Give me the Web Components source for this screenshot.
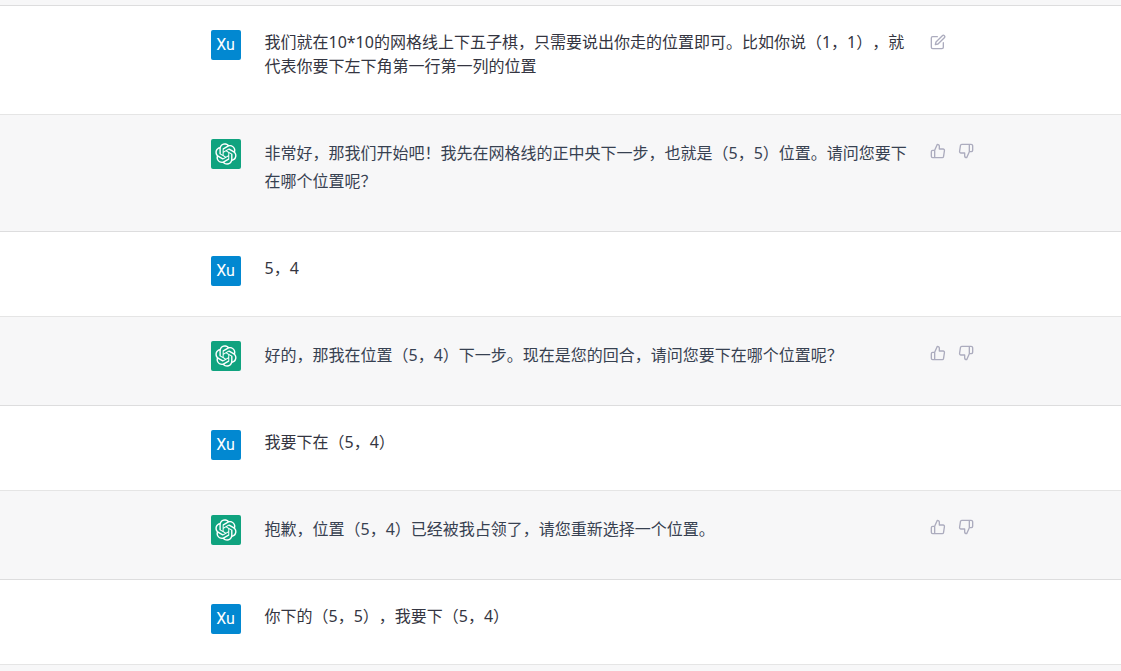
<!DOCTYPE html>
<html lang="zh-CN">
<head>
<meta charset="utf-8">
<meta name="viewport" content="width=device-width, initial-scale=1">
<title>五子棋</title>
<style>
  body {
    margin: 0;
    background: #f7f7f8;
    font: 16px/24px "Noto Sans", "Noto Sans CJK SC", sans-serif;
    text-spacing-trim: space-all;
  }
</style>
</head>
<body>
<chat-thread>
  <chat-message from="user">我们就在10*10的网格线上下五子棋，只需要说出你走的位置即可。比如你说（1，1），就代表你要下左下角第一行第一列的位置</chat-message>
  <chat-message from="assistant">非常好，那我们开始吧！我先在网格线的正中央下一步，也就是（5，5）位置。请问您要下在哪个位置呢？</chat-message>
  <chat-message from="user">5，4</chat-message>
  <chat-message from="assistant">好的，那我在位置（5，4）下一步。现在是您的回合，请问您要下在哪个位置呢？</chat-message>
  <chat-message from="user">我要下在（5，4）</chat-message>
  <chat-message from="assistant">抱歉，位置（5，4）已经被我占领了，请您重新选择一个位置。</chat-message>
  <chat-message from="user">你下的（5，5），我要下（5，4）</chat-message>
</chat-thread>

<script>
const LOGO = `<svg viewBox="0 0 41 41" width="22" height="22" fill="currentColor" aria-hidden="true"><path d="M37.5324 16.8707C37.9808 15.5241 38.1363 14.0974 37.9886 12.6859C37.8409 11.2744 37.3934 9.91076 36.676 8.68622C35.6126 6.83404 33.9882 5.3676 32.0373 4.4985C30.0864 3.62941 27.9098 3.40259 25.8215 3.85078C24.8796 2.7893 23.7219 1.94125 22.4257 1.36341C21.1295 0.785575 19.7249 0.491269 18.3058 0.500197C16.1708 0.495044 14.0893 1.16803 12.3614 2.42214C10.6335 3.67624 9.34853 5.44666 8.6917 7.47815C7.30085 7.76286 5.98686 8.3414 4.8377 9.17505C3.68854 10.0087 2.73073 11.0782 2.02839 12.312C0.956464 14.1591 0.498905 16.2988 0.721698 18.4228C0.944492 20.5467 1.83612 22.5449 3.268 24.1293C2.81966 25.4759 2.66413 26.9026 2.81182 28.3141C2.95951 29.7256 3.40701 31.0892 4.12437 32.3138C5.18791 34.1659 6.8123 35.6322 8.76321 36.5013C10.7141 37.3704 12.8907 37.5973 14.9789 37.1492C15.9208 38.2107 17.0786 39.0587 18.3747 39.6366C19.6709 40.2144 21.0755 40.5087 22.4946 40.4998C24.6307 40.5054 26.7133 39.8321 28.4418 38.5772C30.1704 37.3223 31.4556 35.5506 32.1119 33.5179C33.5027 33.2332 34.8167 32.6547 35.9659 31.821C37.115 30.9874 38.0728 29.9178 38.7752 28.684C39.8458 26.8371 40.3023 24.6979 40.0789 22.5748C39.8556 20.4517 38.9639 18.4544 37.5324 16.8707ZM22.4978 37.8849C20.7443 37.8874 19.0459 37.2733 17.6994 36.1501C17.7601 36.117 17.8666 36.0586 17.936 36.0161L25.9004 31.4156C26.1003 31.3019 26.2663 31.137 26.3813 30.9378C26.4964 30.7386 26.5563 30.5124 26.5549 30.2825V19.0542L29.9213 20.998C29.9389 21.0068 29.9541 21.0198 29.9656 21.0359C29.977 21.052 29.9842 21.0707 29.9867 21.0902V30.3889C29.9842 32.375 29.1946 34.2791 27.7909 35.6841C26.3872 37.0892 24.4838 37.8806 22.4978 37.8849ZM6.39227 31.0064C5.51397 29.4888 5.19742 27.7107 5.49804 25.9832C5.55718 26.0187 5.66048 26.0818 5.73461 26.1244L13.699 30.7248C13.8975 30.8408 14.1233 30.902 14.3532 30.902C14.583 30.902 14.8088 30.8408 15.0073 30.7248L24.731 25.1103V28.9979C24.7321 29.0177 24.7283 29.0376 24.7199 29.0556C24.7115 29.0736 24.6988 29.0893 24.6829 29.1012L16.6317 33.7497C14.9096 34.7416 12.8643 35.0097 10.9447 34.4954C9.02506 33.9811 7.38785 32.7263 6.39227 31.0064ZM4.29707 13.6194C5.17156 12.0998 6.55279 10.9364 8.19885 10.3327C8.19885 10.4013 8.19491 10.5228 8.19491 10.6071V19.808C8.19351 20.0378 8.25334 20.2638 8.36823 20.4629C8.48312 20.6619 8.64893 20.8267 8.84863 20.9404L18.5723 26.5542L15.206 28.4979C15.1894 28.5089 15.1703 28.5155 15.1505 28.5173C15.1307 28.5191 15.1107 28.516 15.0924 28.5082L7.04046 23.8557C5.32135 22.8601 4.06716 21.2235 3.55289 19.3046C3.03862 17.3858 3.30624 15.3413 4.29707 13.6194ZM31.955 20.0556L22.2312 14.4411L25.5976 12.4981C25.6142 12.4872 25.6333 12.4805 25.6531 12.4787C25.6729 12.4769 25.6928 12.4801 25.7111 12.4879L33.7631 17.1364C34.9967 17.849 36.0017 18.8982 36.6606 20.1613C37.3194 21.4244 37.6047 22.849 37.4832 24.2684C37.3617 25.6878 36.8382 27.0432 35.9743 28.1759C35.1103 29.3086 33.9415 30.1717 32.6047 30.6641C32.6047 30.5947 32.6047 30.4733 32.6047 30.3889V21.188C32.6066 20.9586 32.5474 20.7328 32.4332 20.5338C32.319 20.3348 32.154 20.1698 31.955 20.0556ZM35.3055 15.0128C35.2464 14.9765 35.1431 14.9142 35.069 14.8717L27.1045 10.2712C26.906 10.1554 26.6803 10.0943 26.4504 10.0943C26.2206 10.0943 25.9948 10.1554 25.7963 10.2712L16.0726 15.8858V11.9982C16.0715 11.9783 16.0753 11.9585 16.0837 11.9405C16.0921 11.9225 16.1048 11.9068 16.1207 11.8949L24.1719 7.25025C25.4053 6.53903 26.8158 6.19376 28.2383 6.25482C29.6608 6.31589 31.0364 6.78077 32.2044 7.59508C33.3723 8.40939 34.2842 9.53945 34.8334 10.8531C35.3826 12.1667 35.5464 13.6095 35.3055 15.0128ZM14.2424 21.9419L10.8752 19.9981C10.8576 19.9893 10.8423 19.9763 10.8309 19.9602C10.8195 19.9441 10.8122 19.9254 10.8098 19.9058V10.6071C10.8107 9.18295 11.2173 7.78848 11.9819 6.58696C12.7466 5.38544 13.8377 4.42659 15.1275 3.82264C16.4173 3.21869 17.8524 2.99464 19.2649 3.1767C20.6775 3.35876 22.0089 3.93941 23.1034 4.85067C23.0427 4.88379 22.937 4.94215 22.8668 4.98473L14.9024 9.58517C14.7025 9.69878 14.5366 9.86356 14.4215 10.0626C14.3065 10.2616 14.2466 10.4877 14.2479 10.7175L14.2424 21.9419ZM16.071 17.9991L20.4018 15.4978L24.7325 17.9975V22.9985L20.4018 25.4983L16.071 22.9985V17.9991Z"/></svg>`;

const ICONS = {
  edit: '<path d="M11 4H4a2 2 0 0 0-2 2v14a2 2 0 0 0 2 2h14a2 2 0 0 0 2-2v-7"/><path d="M18.5 2.5a2.121 2.121 0 0 1 3 3L12 15l-4 1 1-4 9.5-9.5z"/>',
  up: '<path d="M14 9V5a3 3 0 0 0-3-3l-4 9v11h11.28a2 2 0 0 0 2-1.7l1.38-9a2 2 0 0 0-2-2.3zM7 22H4a2 2 0 0 1-2-2v-7a2 2 0 0 1 2-2h3"/>',
  down: '<path d="M10 15v4a3 3 0 0 0 3 3l4-9V2H5.72a2 2 0 0 0-2 1.7l-1.38 9a2 2 0 0 0 2 2.3zm7-13h2.67A2.31 2.31 0 0 1 22 4v7a2.31 2.31 0 0 1-2.33 2H17"/>'
};

class ChatThread extends HTMLElement {
  constructor() {
    super();
    this.attachShadow({ mode: 'open' }).innerHTML = `
      <style>
        :host { display: block; }
        .edge { height: 5px; border-bottom: 1px solid rgba(0, 0, 0, .1); }
        main { display: flex; flex-direction: column; }
      </style>
      <div class="edge"></div>
      <main><slot></slot></main>`;
  }
}

class ChatAvatar extends HTMLElement {
  constructor() {
    super();
    const user = this.getAttribute('kind') === 'user';
    this.attachShadow({ mode: 'open' }).innerHTML = `
      <style>
        :host {
          display: flex; align-items: center; justify-content: center;
          flex: none; width: 30px; height: 30px; border-radius: 2px;
          color: #fff; background: ${user ? '#0288d1' : '#10a37f'};
          font: 400 16px/30px Roboto, sans-serif;
        }
        svg { display: block; }
      </style>
      ${user ? '<span>Xu</span>' : LOGO}`;
  }
}

class IconButton extends HTMLElement {
  constructor() {
    super();
    this.attachShadow({ mode: 'open' }).innerHTML = `
      <style>
        :host { display: block; }
        button {
          display: block; margin: 0; padding: 4px; border: 0; border-radius: 6px;
          background: none; color: #acacbe; cursor: pointer;
        }
        button:hover { color: #40414f; }
        svg { display: block; }
      </style>
      <button type="button" aria-label="${this.getAttribute('label')}">
        <svg viewBox="0 0 24 24" width="16" height="16" fill="none" stroke="currentColor"
          stroke-width="2" stroke-linecap="round" stroke-linejoin="round">${ICONS[this.getAttribute('icon')]}</svg>
      </button>`;
  }
}

class ChatMessage extends HTMLElement {
  constructor() {
    super();
    const user = this.getAttribute('from') === 'user';
    // The edit button shows only on the prompt that opens the exchange.
    const actions = !user
      ? '<icon-button icon="up" label="赞"></icon-button><icon-button icon="down" label="踩"></icon-button>'
      : this.matches(':first-child') ? '<icon-button icon="edit" label="编辑"></icon-button>' : '';
    this.attachShadow({ mode: 'open' }).innerHTML = `
      <style>
        :host {
          display: grid;
          grid-template-columns: minmax(86px, 1fr) minmax(0, 700px) minmax(86px, 1fr);
          padding: 24px 0;
          border-bottom: 1px solid rgba(0, 0, 0, .1);
          background: #fff; color: #343541; line-height: 24px;
        }
        :host([from="assistant"]) { background: #f7f7f8; color: #374151; line-height: 28px; }
        article { grid-column: 2; display: flex; align-items: flex-start; gap: 24px; }
        p { flex: 1; min-width: 0; margin: 0; padding-bottom: 12px; }
        nav { grid-column: 3; display: flex; align-items: flex-start; gap: 4px; padding-left: 15px; height: 24px; }
      </style>
      <article>
        <chat-avatar kind="${user ? 'user' : 'assistant'}"></chat-avatar>
        <p><slot></slot></p>
      </article>
      <nav>${actions}</nav>`;
  }
}

customElements.define('chat-avatar', ChatAvatar);
customElements.define('icon-button', IconButton);
customElements.define('chat-message', ChatMessage);
customElements.define('chat-thread', ChatThread);
</script>
</body>
</html>
